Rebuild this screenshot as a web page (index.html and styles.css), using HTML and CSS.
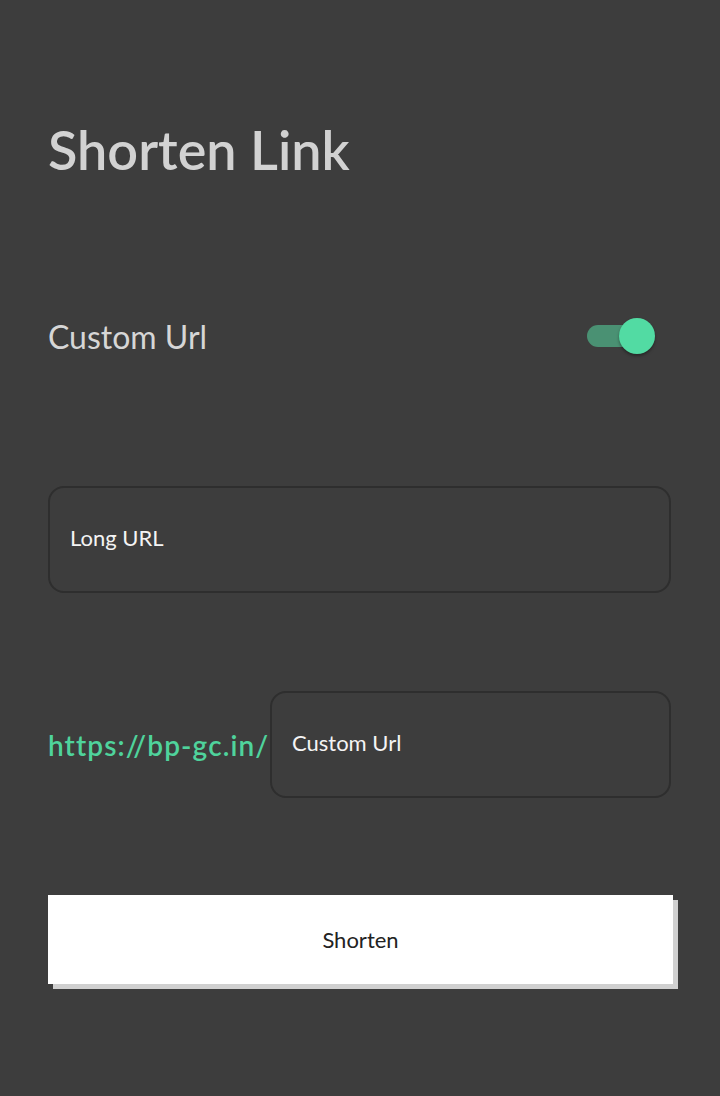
FILE: index.html
```html
<!DOCTYPE html>
<html lang="en">
<head>
    <meta charset="utf-8">
    <title>Shorten Link</title>
    <link rel="stylesheet" href="styles.css">
</head>
<body>
<div class="page">
    <div class="title">Shorten Link</div>

    <div class="switch-row">
        <span class="switch-label">Custom Url</span>
        <div class="switch on">
            <div class="switch_track"></div>
            <div class="switch_thumb"></div>
        </div>
    </div>

    <div class="field field-long">
        <span class="field_text">Long URL</span>
    </div>

    <div class="custom-row">
        <span class="domain">https://bp-gc.in/</span>
        <div class="field field-custom">
            <span class="field_text">Custom Url</span>
        </div>
    </div>

    <div class="send-btn">Shorten</div>
</div>
</body>
</html>
```

FILE: styles.css
```css
html, body {
    background-color: #3d3d3d;
    margin: 0;
    font-family: 'Lato', 'Noto Sans', sans-serif;
}

.page {
    display: flex;
    flex-direction: column;
    padding: 112px 49px 40px 48px;
}

.title {
    font-size: 54px;
    font-weight: 600;
    color: #d2d2d2;
    line-height: 76px;
}

.switch-row {
    display: flex;
    align-items: center;
    justify-content: space-between;
    margin-top: 128px;
    height: 40px;
}

.switch-label {
    font-size: 32px;
    color: #d6d6d6;
}

.switch {
    position: relative;
    width: 68px;
    height: 40px;
    margin-right: 16px;
}

.switch_track {
    position: absolute;
    left: 0;
    top: 9px;
    width: 50px;
    height: 22px;
    border-radius: 11px;
    background-color: #4a9173;
}

.switch_thumb {
    position: absolute;
    right: 0;
    top: 2px;
    width: 36px;
    height: 36px;
    border-radius: 50%;
    background-color: #52dba3;
    box-shadow: 0 2px 3px rgba(0, 0, 0, 0.35);
}

.field {
    display: flex;
    align-items: center;
    box-sizing: border-box;
    height: 107px;
    border: 2px solid #2e2e2e;
    border-radius: 16px;
    padding-left: 20px;
}

.field-long {
    margin-top: 130px;
}

.field_text {
    font-size: 22px;
    color: #f4f4f4;
    margin-top: -4px;
}

.custom-row {
    display: flex;
    align-items: center;
    margin-top: 98px;
}

.domain {
    font-size: 28px;
    font-weight: 600;
    letter-spacing: 1.1px;
    color: #4fd39c;
    width: 222px;
    white-space: nowrap;
}

.field-custom {
    flex: 1;
}

.send-btn {
    display: flex;
    align-items: center;
    justify-content: center;
    margin-top: 97px;
    width: 625px;
    height: 89px;
    background-color: #fff;
    box-shadow: 5px 5px 0 #d0d0d0;
    font-size: 22px;
    color: #222;
}
```
